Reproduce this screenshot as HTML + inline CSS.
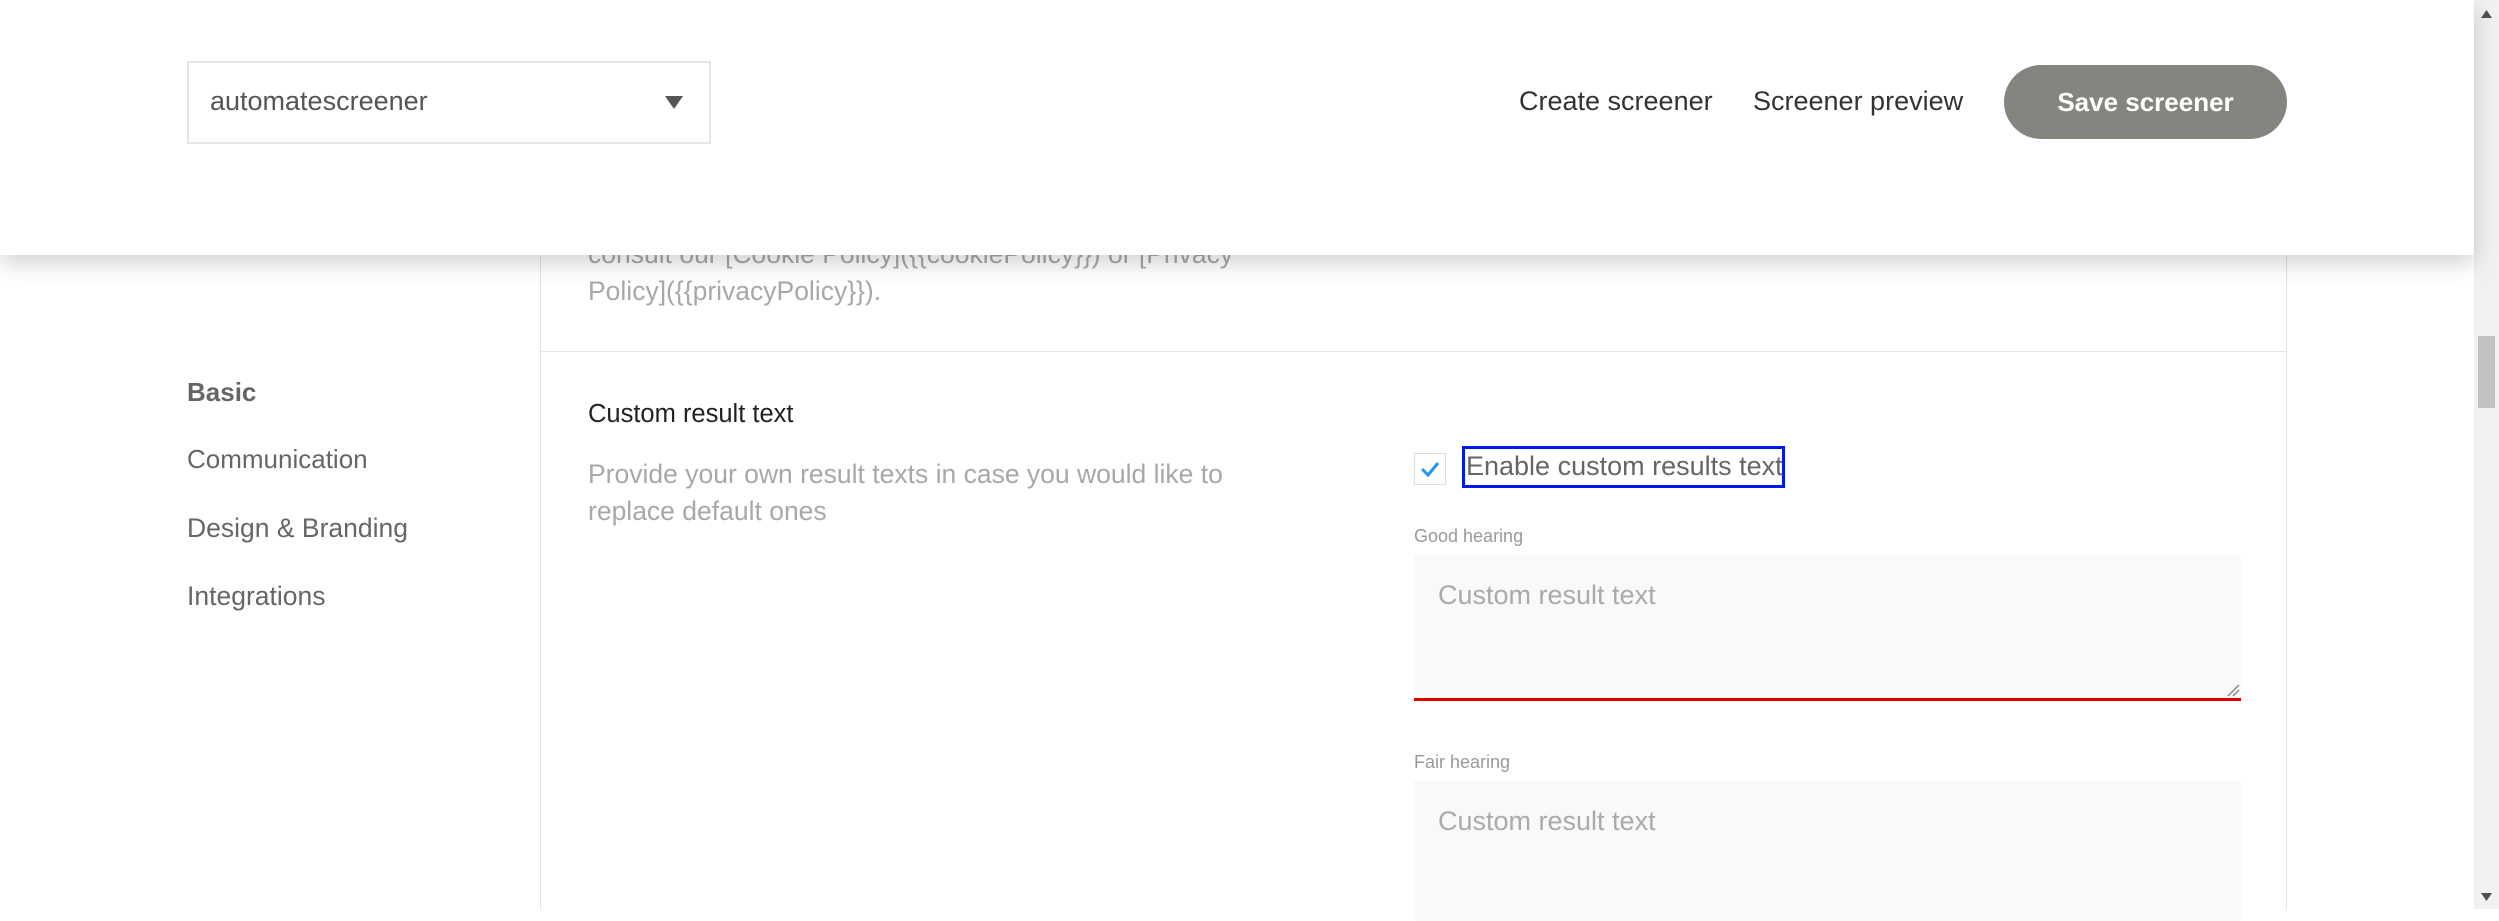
<!DOCTYPE html>
<html><head><meta charset="utf-8"><style>
*{box-sizing:border-box;margin:0;padding:0}
body{width:2499px;height:909px;overflow:hidden;background:#fff;font-family:"Liberation Sans",sans-serif;position:relative}
.a{position:absolute;white-space:nowrap}
#hdr{position:absolute;left:0;top:0;width:2474px;height:255px;background:#fff;box-shadow:0 8px 22px rgba(0,0,0,0.18);z-index:5}
.sb{position:absolute;left:2474px;top:0;width:25px;height:909px;background:#f1f1f1}
</style></head><body>
<div class="a" style="left:540px;top:255px;width:1px;height:654px;background:#e3e3e3"></div>
<div class="a" style="left:2286px;top:255px;width:1px;height:654px;background:#e3e3e3"></div>
<div class="a" style="left:541px;top:351px;width:1745px;height:1px;background:#e6e6e6"></div>
<div class="a" style="left:588px;top:236px;font-size:26.5px;color:#a8a8a8;line-height:37px">consult our [Cookie Policy]({{cookiePolicy}}) or [Privacy<br>Policy]({{privacyPolicy}}).</div>

<div class="a" style="left:187px;top:377px;font-size:26px;color:#666;font-weight:bold">Basic</div>
<div class="a" style="left:187px;top:444px;font-size:26px;color:#666">Communication</div>
<div class="a" style="left:187px;top:513px;font-size:26.5px;color:#666">Design &amp; Branding</div>
<div class="a" style="left:187px;top:581px;font-size:26.5px;color:#666">Integrations</div>

<div class="a" style="left:588px;top:400px;font-size:25.5px;color:#222">Custom result text</div>
<div class="a" style="left:588px;top:456px;font-size:26.5px;color:#a8a8a8;line-height:37px">Provide your own result texts in case you would like to<br>replace default ones</div>

<div class="a" style="left:1414px;top:453px;width:32px;height:32px;border:1px solid #ddd;background:#fff">
<svg width="30" height="30" viewBox="0 0 30 30"><path d="M7 15 L13 21 L23 9" fill="none" stroke="#2196f3" stroke-width="3"/></svg></div>
<div class="a" style="left:1462px;top:446px;width:323px;height:42px;border:3px solid #0018f0"></div>
<div class="a" style="left:1466px;top:451px;font-size:27px;color:#666">Enable custom results text</div>

<div class="a" style="left:1414px;top:526px;font-size:18px;color:#999">Good hearing</div>
<div class="a" style="left:1414px;top:555px;width:827px;height:146px;background:#f9f9f9;border-bottom:3px solid #e00000"></div>
<div class="a" style="left:1438px;top:580px;font-size:27px;color:#aaa">Custom result text</div>
<svg class="a" style="left:2226px;top:683px" width="14" height="14"><path d="M2 13 L13 2 M7 13 L13 7" stroke="#888" stroke-width="1.5"/></svg>

<div class="a" style="left:1414px;top:752px;font-size:18px;color:#999">Fair hearing</div>
<div class="a" style="left:1414px;top:781px;width:827px;height:140px;background:#f9f9f9"></div>
<div class="a" style="left:1438px;top:806px;font-size:27px;color:#aaa">Custom result text</div>

<div id="hdr">
<div class="a" style="left:187px;top:61px;width:524px;height:83px;border:2px solid #e6e6e6"></div>
<div class="a" style="left:210px;top:86px;font-size:27px;color:#555">automatescreener</div>
<svg class="a" style="left:665px;top:96px" width="18" height="14"><path d="M0 0 H18 L9 13 Z" fill="#555"/></svg>
<div class="a" style="left:1519px;top:86px;font-size:27px;color:#333">Create screener</div>
<div class="a" style="left:1753px;top:86px;font-size:27px;color:#333">Screener preview</div>
<div class="a" style="left:2004px;top:65px;width:283px;height:74px;border-radius:37px;background:#858580;color:#fff;font-size:26px;font-weight:bold;text-align:center;line-height:74px">Save screener</div>
</div>

<div class="sb">
<div class="a" style="left:4px;top:336px;width:17px;height:72px;background:#c1c1c1"></div>
<svg class="a" style="left:7px;top:10px" width="11" height="8"><path d="M0 8 L5.5 0 L11 8Z" fill="#505050"/></svg>
<svg class="a" style="left:7px;top:893px" width="11" height="8"><path d="M0 0 L5.5 8 L11 0Z" fill="#505050"/></svg>
</div>
</body></html>
